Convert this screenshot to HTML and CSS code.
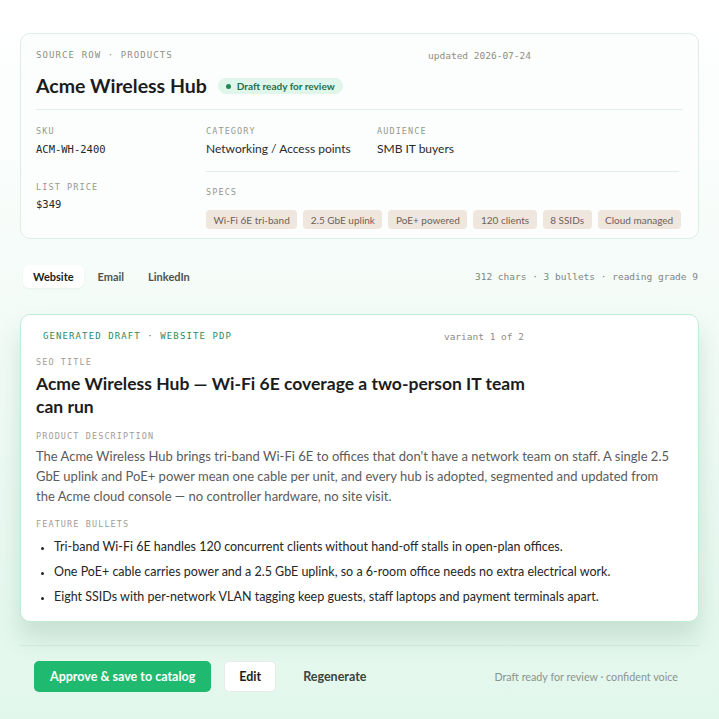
FILE: index.html
```html
<!DOCTYPE html>
<html lang="en">
<head>
<meta charset="utf-8">
<title>Acme Wireless Hub — draft</title>
<link rel="stylesheet" href="styles.css">
</head>
<body>
<main class="page">
  <section class="source-card">
    <div class="src-head">
      <span class="eyebrow">SOURCE ROW · PRODUCTS</span>
      <span class="meta">updated 2026-07-24</span>
    </div>
    <div class="title-row">
      <h1 class="product-name">Acme Wireless Hub</h1>
      <span class="badge"><i class="badge-dot"></i>Draft ready for review</span>
    </div>
    <div class="fields">
      <div class="field">
        <div class="label">SKU</div>
        <div class="value mono-val">ACM-WH-2400</div>
      </div>
      <div class="field">
        <div class="label">CATEGORY</div>
        <div class="value">Networking / Access points</div>
      </div>
      <div class="field">
        <div class="label">AUDIENCE</div>
        <div class="value">SMB IT buyers</div>
      </div>
      <div class="field field-price">
        <div class="label">LIST PRICE</div>
        <div class="value mono-val">$349</div>
      </div>
      <div class="field field-specs">
        <div class="label">SPECS</div>
        <div class="chips">
          <span class="chip">Wi-Fi 6E tri-band</span>
          <span class="chip">2.5 GbE uplink</span>
          <span class="chip">PoE+ powered</span>
          <span class="chip">120 clients</span>
          <span class="chip">8 SSIDs</span>
          <span class="chip">Cloud managed</span>
        </div>
      </div>
    </div>
  </section>

  <div class="tabs-row">
    <nav class="tabs">
      <span class="tab tab-active">Website</span>
      <span class="tab">Email</span>
      <span class="tab">LinkedIn</span>
    </nav>
    <span class="stats">312 chars · 3 bullets · reading grade 9</span>
  </div>

  <section class="draft-card">
    <div class="draft-head">
      <span class="eyebrow eyebrow-green">GENERATED DRAFT · WEBSITE PDP</span>
      <span class="meta">variant 1 of 2</span>
    </div>
    <div class="section-label section-label-first">SEO TITLE</div>
    <h2 class="seo-title">Acme Wireless Hub — Wi-Fi 6E coverage a two-person IT team can run</h2>
    <div class="section-label">PRODUCT DESCRIPTION</div>
    <p class="description">The Acme Wireless Hub brings tri-band Wi-Fi 6E to offices that don't have a network team on staff. A single 2.5 GbE uplink and PoE+ power mean one cable per unit, and every hub is adopted, segmented and updated from the Acme cloud console — no controller hardware, no site visit.</p>
    <div class="section-label">FEATURE BULLETS</div>
    <ul class="bullets">
      <li>Tri-band Wi-Fi 6E handles 120 concurrent clients without hand-off stalls in open-plan offices.</li>
      <li>One PoE+ cable carries power and a 2.5 GbE uplink, so a 6-room office needs no extra electrical work.</li>
      <li>Eight SSIDs with per-network VLAN tagging keep guests, staff laptops and payment terminals apart.</li>
    </ul>
  </section>

  <footer class="actions">
    <div class="buttons">
      <button class="btn btn-primary">Approve &amp; save to catalog</button>
      <button class="btn btn-secondary">Edit</button>
      <button class="btn btn-ghost">Regenerate</button>
    </div>
    <span class="status">Draft ready for review · confident voice</span>
  </footer>
</main>
</body>
</html>
```

FILE: styles.css
```css
* { box-sizing: border-box; }

html, body {
  margin: 0;
  padding: 0;
}

body {
  min-height: 719px;
  background: linear-gradient(180deg, #ffffff 0%, #f6fcf9 35%, #e9f9f0 75%, #e2f7ec 100%);
  font-family: "Lato", "Noto Sans", sans-serif;
  color: #1f1f1f;
}

.page {
  padding: 33px 20px 0 20px;
}

/* ---------- source card ---------- */
.source-card {
  border: 1px solid #dcefe4;
  border-radius: 10px;
  background: rgba(252, 254, 253, 0.85);
  padding: 15px 15px 9px 15px;
}

.src-head, .draft-head {
  display: flex;
  justify-content: space-between;
  align-items: center;
  max-width: 495px;
  height: 12px;
}

.draft-head {
  max-width: 488px;
}

.eyebrow {
  font-family: "DejaVu Sans Mono", monospace;
  font-size: 9px;
  letter-spacing: 1.1px;
  color: #8c8f88;
}

.eyebrow-green {
  color: #2e8a5f;
  padding-left: 7px;
}

.meta {
  font-family: "DejaVu Sans Mono", monospace;
  font-size: 9.5px;
  color: #8e8c88;
}

.title-row {
  display: flex;
  align-items: center;
  gap: 11px;
  margin-top: 12px;
  padding-bottom: 10px;
  border-bottom: 1px solid #e2efe7;
}

.product-name {
  margin: 0;
  font-size: 19.5px;
  line-height: 26px;
  font-weight: 700;
  color: #1c1c1c;
}

.badge {
  display: inline-flex;
  align-items: center;
  gap: 6px;
  height: 16px;
  padding: 0 8px 0 8px;
  border-radius: 8px;
  background: #e0f6ea;
  color: #23704a;
  font-size: 10px;
  font-weight: 700;
}

.badge-dot {
  width: 5px;
  height: 5px;
  border-radius: 50%;
  background: #1f8a55;
}

.fields {
  display: grid;
  grid-template-columns: 170px 171px 1fr;
  padding-top: 15px;
}

.label {
  font-family: "DejaVu Sans Mono", monospace;
  font-size: 8.5px;
  line-height: 12px;
  letter-spacing: 1.1px;
  color: #959890;
}

.value {
  margin-top: 4px;
  font-size: 12px;
  line-height: 16px;
  color: #2a2a2a;
}

.mono-val {
  font-family: "DejaVu Sans Mono", monospace;
  font-size: 10.5px;
  color: #262626;
}

.field-price {
  margin-top: 14px;
  padding-top: 10px;
}

.field-price .value { margin-top: 3px; }

.field-specs {
  grid-column: 2 / 4;
  margin-top: 14px;
  padding-top: 14px;
  border-top: 1px solid #e2efe7;
  margin-right: 4px;
}

.chips {
  display: flex;
  flex-wrap: nowrap;
  gap: 6px;
  margin-top: 12px;
}

.chip {
  display: inline-flex;
  align-items: center;
  height: 19px;
  padding: 0 7.5px;
  border-radius: 4px;
  background: #efe6de;
  color: #6d625a;
  font-size: 10px;
  white-space: nowrap;
}

/* ---------- tabs ---------- */
.tabs-row {
  display: flex;
  justify-content: space-between;
  align-items: center;
  margin-top: 26px;
  padding-left: 3px;
}

.tabs {
  display: flex;
  gap: 4px;
}

.tab {
  display: inline-flex;
  align-items: center;
  height: 23px;
  padding: 0 10px;
  border-radius: 6px;
  font-size: 11px;
  font-weight: 700;
  color: #4f534e;
}

.tab-active {
  background: #ffffff;
  color: #1c1c1c;
  box-shadow: 0 1px 2px rgba(20, 60, 40, 0.05);
}

.stats {
  font-family: "DejaVu Sans Mono", monospace;
  font-size: 9.5px;
  color: #7f8680;
  margin-right: 1px;
}

/* ---------- draft card ---------- */
.draft-card {
  margin-top: 26px;
  border: 1px solid #bfeed5;
  border-radius: 10px;
  background: #ffffff;
  padding: 15px 15px 16px 15px;
  box-shadow: 0 16px 24px rgba(40, 100, 70, 0.16);
}

.section-label {
  font-family: "DejaVu Sans Mono", monospace;
  font-size: 8.5px;
  line-height: 12px;
  letter-spacing: 1.1px;
  color: #a39c97;
  margin-top: 12px;
}

.section-label-first {
  margin-top: 14px;
}

.seo-title {
  margin: 4px 0 0 0;
  max-width: 500px;
  font-size: 17.5px;
  line-height: 23px;
  font-weight: 700;
  color: #1c1c1c;
}

.description {
  margin: 4px 0 0 0;
  max-width: 640px;
  font-size: 13px;
  line-height: 20px;
  color: #5b5b5b;
}

.bullets {
  margin: 8px 0 0 0;
  padding: 0 0 0 18px;
  font-size: 12.5px;
  line-height: 17px;
  color: #262626;
}

.bullets li {
  margin-top: 8px;
}

.bullets li:first-child { margin-top: 0; }

.bullets li::marker {
  font-size: 10px;
}

/* ---------- footer ---------- */
.actions {
  display: flex;
  justify-content: space-between;
  align-items: center;
  margin-top: 23px;
  border-top: 1px solid rgba(200, 225, 210, 0.6);
  padding: 15px 21px 0 14px;
}

.buttons {
  display: flex;
  align-items: center;
  gap: 13px;
}

.btn {
  font-family: "Lato", "Noto Sans", sans-serif;
  font-size: 12.5px;
  height: 31px;
  border-radius: 5px;
  cursor: pointer;
}

.btn-primary {
  padding: 0 16px;
  border: none;
  background: #1fba70;
  color: #ffffff;
  font-weight: 700;
}

.btn-secondary {
  padding: 0 14px;
  border: 1px solid #e6ece8;
  background: #ffffff;
  color: #1c1c1c;
  font-weight: 700;
}

.btn-ghost {
  padding: 0 14px;
  border: none;
  background: transparent;
  color: #3e423f;
  font-weight: 700;
}

.status {
  font-size: 10.75px;
  color: #8b948e;
}
```
